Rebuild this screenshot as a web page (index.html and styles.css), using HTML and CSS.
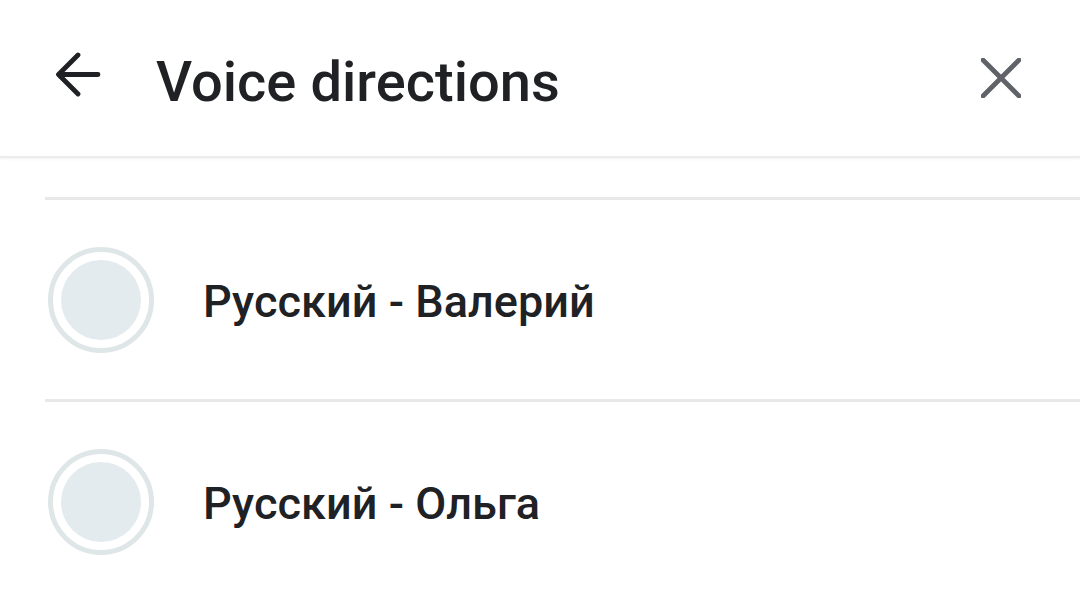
FILE: index.html
```html
<!DOCTYPE html>
<html>
<head>
<meta charset="utf-8">
<link rel="stylesheet" href="styles.css">
</head>
<body>
<div class="app">
  <header class="header">
    <button class="icon-btn back" aria-label="Back">
      <svg width="48" height="48" viewBox="0 0 48 48"><path d="M45 22.5H11M25 3 5.5 22.5 25 42" fill="none" stroke="#202124" stroke-width="4.8" stroke-linecap="round" stroke-linejoin="round"/></svg>
    </button>
    <h1 class="title">Voice directions</h1>
    <button class="icon-btn close" aria-label="Close">
      <svg width="40" height="40" viewBox="0 0 40 40"><path d="M2 2 38 38M38 2 2 38" fill="none" stroke="#5f6368" stroke-width="4.8" stroke-linecap="round"/></svg>
    </button>
  </header>
  <div class="list">
    <div class="row-cut"></div>
    <div class="row">
      <span class="radio"><span class="dot"></span></span>
      <span class="label">Русский - Валерий</span>
    </div>
    <div class="row">
      <span class="radio"><span class="dot"></span></span>
      <span class="label">Русский - Ольга</span>
    </div>
  </div>
</div>
</body>
</html>
```
FILE: styles.css
```css
html, body {
  margin: 0;
  padding: 0;
  background: #ffffff;
}
body {
  font-family: Roboto, "Noto Sans", sans-serif;
  color: #202124;
  overflow: hidden;
}
.app {
  width: 1080px;
  height: 597px;
  overflow: hidden;
}
.header {
  height: 156px;
  display: flex;
  align-items: center;
  border-bottom: 2px solid #ececec;
  box-shadow: 0 1px 3px rgba(0,0,0,0.05);
  position: relative;
}
.icon-btn {
  background: none;
  border: 0;
  padding: 0;
  display: flex;
  align-items: center;
  justify-content: center;
}
.back {
  margin-left: 53px;
  width: 48px;
  height: 48px;
  margin-top: -4px;
}
.title {
  margin: 0 0 0 55px;
  font-size: 56px;
  font-weight: 500;
  letter-spacing: 0.05px;
  flex: 1;
  line-height: 1;
  margin-top: 8px;
}
.close {
  width: 40px;
  height: 40px;
  margin-right: 59px;
  margin-top: -1px;
}
.list {
  display: flex;
  flex-direction: column;
}
.row-cut {
  height: 39px;
  border-bottom: 3px solid #e8e8e8;
  margin-left: 45px;
}
.row {
  height: 199px;
  display: flex;
  align-items: center;
  margin-left: 45px;
  border-bottom: 3px solid #e8e8e8;
}
.radio {
  width: 96px;
  height: 96px;
  border: 5px solid #dfe6e8;
  border-radius: 50%;
  display: flex;
  align-items: center;
  justify-content: center;
  margin-left: 3px;
  flex: none;
}
.dot {
  width: 80px;
  height: 80px;
  border-radius: 50%;
  background: #e3ebee;
}
.label {
  margin-left: 49px;
  font-size: 45px;
  font-weight: 500;
  letter-spacing: 0.05px;
  margin-top: 3px;
}
```
